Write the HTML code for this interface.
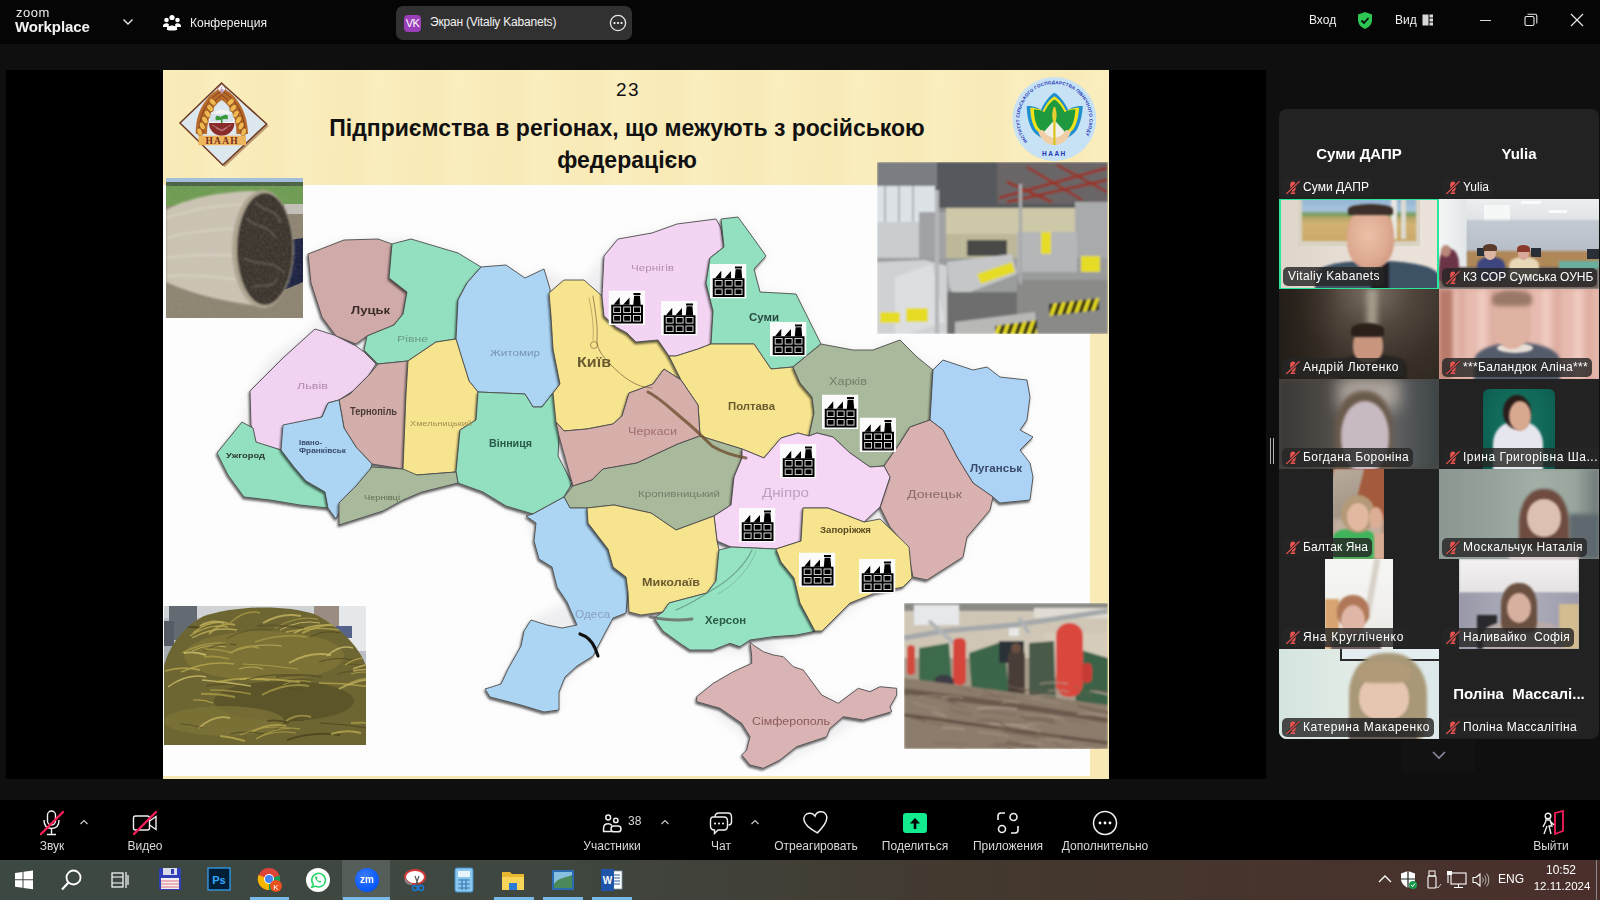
<!DOCTYPE html>
<html><head><meta charset="utf-8">
<style>
*{margin:0;padding:0;box-sizing:border-box}
html,body{width:1600px;height:900px;overflow:hidden;background:#0f0f0f;font-family:"Liberation Sans",sans-serif;color:#fff}
.a{position:absolute}
#top{left:0;top:0;width:1600px;height:44px;background:#050505}
#video{left:6px;top:70px;width:1260px;height:709px;background:#000}
#slide{left:163px;top:70px;width:946px;height:709px;background:linear-gradient(180deg,#faecba 0%,#f8e9b4 100%);overflow:hidden}
#white{left:163px;top:185px;width:927px;height:591px;background:#fdfdfd}
#toolbar{left:0;top:800px;width:1600px;height:60px;background:#000}
#taskbar{left:0;top:860px;width:1600px;height:40px;background:linear-gradient(90deg,#3c4842 0%,#3f4740 35%,#43392f 60%,#4a2f2b 100%)}
.tb-lbl{position:absolute;font-size:12px;color:#d8d8d8;text-align:center;white-space:nowrap}
</style></head><body>
<div id="top" class="a"></div>
<div id="video" class="a"></div>
<div id="slide" class="a"></div>
<div id="white" class="a"></div>
<div id="toolbar" class="a"></div>
<div id="taskbar" class="a"></div>
<div class="a" style="left:163px;top:70px;width:945px;height:115px;background:repeating-linear-gradient(90deg,rgba(255,255,255,0) 0px,rgba(235,215,150,0.10) 30px,rgba(255,255,240,0.10) 55px,rgba(255,255,255,0) 80px)"></div>
<div class="a" style="left:608px;top:79px;width:40px;text-align:center;font-size:19px;letter-spacing:1.5px;color:#111">23</div>
<div class="a" style="left:300px;top:112px;width:654px;text-align:center;font-size:23px;font-weight:bold;color:#111;line-height:32px;white-space:nowrap">Підприємства в регіонах, що межують з російською<br>федерацією</div>
<!-- NAAN diamond logo -->
<svg class="a" style="left:176px;top:78px" width="96" height="92" viewBox="0 0 96 92">
<polygon points="47.5,7 92.6,48 48.8,89 6,47" fill="#8a5a40" opacity="0.55"/>
<polygon points="45.5,5 90.6,46 46.8,87 4,45" fill="#dde7ee" stroke="#6e3a22" stroke-width="1.5"/>
<path d="M19.9,56 C19,35 30,16 45.7,9.7 C61,16 72,35 72,56 L60.5,56 C60.5,40 55,28 45.7,22 C36,28 31,40 31,56 Z" fill="#b86a2a"/>
<path d="M23,55 C23,36 32,20 45.7,13 M69,55 C69,36 59,20 45.7,13 M27,55 C27,38 35,24 45.7,17 M65,55 C65,38 56,24 45.7,17" stroke="#7a3a1a" stroke-width="0.9" fill="none"/>
<ellipse cx="23.7" cy="54.0" rx="2.6" ry="4.2" transform="rotate(-20 23.7 54.0)" fill="#f0b850" stroke="#8a4a1a" stroke-width="0.6"/><ellipse cx="26.3" cy="48.0" rx="2.6" ry="4.2" transform="rotate(-25 26.3 48.0)" fill="#f0b850" stroke="#8a4a1a" stroke-width="0.6"/><ellipse cx="28.9" cy="42.0" rx="2.6" ry="4.2" transform="rotate(-30 28.9 42.0)" fill="#f0b850" stroke="#8a4a1a" stroke-width="0.6"/><ellipse cx="31.5" cy="36.0" rx="2.6" ry="4.2" transform="rotate(-35 31.5 36.0)" fill="#f0b850" stroke="#8a4a1a" stroke-width="0.6"/><ellipse cx="34.1" cy="30.0" rx="2.6" ry="4.2" transform="rotate(-40 34.1 30.0)" fill="#f0b850" stroke="#8a4a1a" stroke-width="0.6"/><ellipse cx="36.7" cy="24.0" rx="2.6" ry="4.2" transform="rotate(-45 36.7 24.0)" fill="#f0b850" stroke="#8a4a1a" stroke-width="0.6"/><ellipse cx="67.7" cy="54.0" rx="2.6" ry="4.2" transform="rotate(20 67.7 54.0)" fill="#f0b850" stroke="#8a4a1a" stroke-width="0.6"/><ellipse cx="65.1" cy="48.0" rx="2.6" ry="4.2" transform="rotate(25 65.1 48.0)" fill="#f0b850" stroke="#8a4a1a" stroke-width="0.6"/><ellipse cx="62.5" cy="42.0" rx="2.6" ry="4.2" transform="rotate(30 62.5 42.0)" fill="#f0b850" stroke="#8a4a1a" stroke-width="0.6"/><ellipse cx="59.9" cy="36.0" rx="2.6" ry="4.2" transform="rotate(35 59.9 36.0)" fill="#f0b850" stroke="#8a4a1a" stroke-width="0.6"/><ellipse cx="57.3" cy="30.0" rx="2.6" ry="4.2" transform="rotate(40 57.3 30.0)" fill="#f0b850" stroke="#8a4a1a" stroke-width="0.6"/><ellipse cx="54.7" cy="24.0" rx="2.6" ry="4.2" transform="rotate(45 54.7 24.0)" fill="#f0b850" stroke="#8a4a1a" stroke-width="0.6"/>
<polygon points="45.7,6 50,11 45.7,16 41.4,11" fill="#fff" stroke="#7a3a2a" stroke-width="0.6"/>
<text x="45.7" y="13.5" font-family="Liberation Serif" font-size="6" fill="#8a2b5a" text-anchor="middle">ф</text>
<circle cx="45.7" cy="44.5" r="12.7" fill="#f4f4f4"/>
<path d="M33,45 A12.7,12.7 0 0 0 58.4,45 Z" fill="#8a2b2b"/>
<path d="M36,47 L45.7,52 M40,50 L45.7,53 M55,47 L45.7,52 M51,50 L45.7,53" stroke="#d8a0a0" stroke-width="0.6"/>
<rect x="34" y="36" width="23" height="8" fill="#c8d8e8" opacity="0.7"/>
<path d="M45.7,45 L45.7,38 M45.7,41 C42,37 39.5,38.5 40.5,41.5 Z M45.7,40 C49,36 52,37.5 51,40.5 Z" stroke="#3a9a3a" stroke-width="1.6" fill="#3a9a3a"/>
<rect x="22.5" y="57.7" width="47.5" height="9.5" fill="#eeb65c"/>
<text x="46.2" y="66" font-family="Liberation Serif" font-weight="bold" font-size="9.5" fill="#7a2f1f" text-anchor="middle" letter-spacing="1.2">НААН</text>
</svg>
<!-- Institute circle logo -->
<svg class="a" style="left:1010px;top:75px" width="90" height="90" viewBox="0 0 90 90">
<circle cx="44.4" cy="44" r="42" fill="#c7e2f5"/>
<path d="M16.7,31 C24,31 29,33 31,35 C34,28 39,21 44.4,17.8 C50,21 55,28 58.3,35 C60,33 65,31 72.8,31 C72,42 70,50 66,56 C60,63 52,66 44.4,66 C37,66 29,63 23,56 C19,50 17,42 16.7,31 Z" fill="#1f8fd0"/>
<path d="M16.7,31 C24,31 29,33 31,35 C34,28 39,21 44.4,17.8 C50,21 55,28 58.3,35 C60,33 65,31 72.8,31 C72,42 70,50 66,56 C60,63 52,66 44.4,66 C37,66 29,63 23,56 C19,50 17,42 16.7,31 Z" fill="#f2e21a" transform="translate(44.4 44) scale(0.87) translate(-44.4 -44)"/>
<path d="M16.7,31 C24,31 29,33 31,35 C34,28 39,21 44.4,17.8 C50,21 55,28 58.3,35 C60,33 65,31 72.8,31 C72,42 70,50 66,56 C60,63 52,66 44.4,66 C37,66 29,63 23,56 C19,50 17,42 16.7,31 Z" fill="#1f9a3e" transform="translate(44.4 44) scale(0.74) translate(-44.4 -44)"/>
<path d="M33,58 L44.4,45 L56,58 L55,66 L34,66 Z" fill="#f2efe8"/>
<path d="M28,56 C31,66 38,70 44,70 L44,63 C40,62 36,60 33,55 Z M61,56 C58,66 51,70 45,70 L45,63 C49,62 53,60 56,55 Z" fill="#f1cfa6"/>
<path d="M44.4,32 L44.4,70" stroke="#d9c21a" stroke-width="2.2"/>
<ellipse cx="44.4" cy="40" rx="2.2" ry="7" fill="#e8d030"/>
<text x="44.4" y="81" font-family="Liberation Sans" font-weight="bold" font-size="6.5" fill="#2234b8" text-anchor="middle" letter-spacing="1.5">НААН</text>
<path id="arc" d="M17.6,66.5 A35,35 0 1 1 71.2,66.5" fill="none"/>
<text font-family="Liberation Sans" font-weight="bold" font-size="4.6" fill="#2234b8" letter-spacing="0.2"><textPath href="#arc">ІНСТИТУТ СІЛЬСЬКОГО ГОСПОДАРСТВА ПІВНІЧНОГО СХОДУ</textPath></text>
</svg>
<svg class="a" style="left:0;top:0" width="1600" height="900" viewBox="0 0 1600 900">
<defs>
<filter id="sh" x="-10%" y="-10%" width="120%" height="120%">
<feGaussianBlur in="SourceAlpha" stdDeviation="1.2"/>
<feOffset dx="-1.2" dy="1.5" result="o"/>
<feFlood flood-color="#000" flood-opacity="0.6"/>
<feComposite in2="o" operator="in"/>
<feMerge><feMergeNode/><feMergeNode in="SourceGraphic"/></feMerge>
</filter>
<filter id="glow" x="-10%" y="-10%" width="120%" height="120%">
<feGaussianBlur stdDeviation="5"/>
</filter>
</defs>
<g fill="#e4e4e8" filter="url(#glow)" opacity="0.6">
<polygon points="308,254 344,240 378,239 411,239 458,253 481,267 506,265 525,278 544,269 564,280 584,280 604,256 618,239 652,233 677,224 716,219 738,217 754,239 766,256 754,269 760,292 796,294 810,322 821,344 853,350 873,350 900,340 933,370 943,360 973,370 1000,377 1027,380 1030,397 1020,430 1033,437 1020,450 1033,477 1030,500 1000,503 993,497 990,510 967,537 963,557 927,580 913,577 912,578 903,587 875,593 822,631 797,640 769,643 794,668 812,690 840,702 862,690 887,687 896,693 887,715 853,724 828,740 794,758 769,768 750,752 744,737 713,712 697,699 707,690 731,684 750,668 750,652 719,652 688,649 663,631 654,618 626,613 605,633 577,666 559,692 559,710 544,712 521,705 490,697 485,689 501,684 521,646 531,620 567,602 552,567 534,541 526,516 506,506 483,492 458,483 422,492 383,511 339,525 328,508 244,497 228,475 217,453 242,422 250,389 272,356 306,333 322,317 311,283"/>
</g>
<g stroke="#4e4e4e" stroke-width="0.9" stroke-linejoin="round">
<!-- Volyn -->
<polygon filter="url(#sh)" fill="#cfaaa8" points="308,254 344,240 378,239 392,244 389,278 407,292 403,314 394,325 367,336 356,344 336,336 322,317 311,283"/>
<!-- Rivne -->
<polygon filter="url(#sh)" fill="#92e0c0" points="392,244 411,239 458,253 481,267 467,283 458,300 456,339 436,342 408,361 378,364 364,350 367,336 394,325 403,314 407,292 389,278"/>
<!-- Zhytomyr -->
<polygon filter="url(#sh)" fill="#acd5f3" points="481,267 506,265 525,278 544,269 550,289 551,316 553,349 560,384 553,393 542,407 533,407 525,394 478,392 469,381 461,356 456,339 458,300 467,283"/>
<!-- Lviv -->
<polygon filter="url(#sh)" fill="#f1d3f1" points="315,329 334,335 356,346 364,352 376,364 369,375 353,391 339,400 328,403 322,417 289,425 281,450 256,443 251,425 250,391 283,358"/>
<!-- Ternopil -->
<polygon filter="url(#sh)" fill="#d3aeaa" points="378,364 408,361 406,394 403,469 372,464 356,447 344,428 339,400 350,394 369,375"/>
<!-- Khmelnytskyi -->
<polygon filter="url(#sh)" fill="#f6e48e" points="408,361 436,342 456,339 469,381 478,392 476,420 460,430 456,472 417,475 406,478 403,469 406,394"/>
<!-- Vinnytsia -->
<polygon filter="url(#sh)" fill="#92e0c0" points="478,392 525,394 533,407 542,407 553,393 556,417 559,436 558,456 572,483 564,497 533,514 506,506 483,492 458,483 456,472 460,430 476,420"/>
<!-- Zakarpattia -->
<polygon filter="url(#sh)" fill="#92e0c0" points="217,453 242,422 253,428 256,442 281,450 294,467 306,481 325,492 328,508 300,505 270,500 244,497 228,475"/>
<!-- Ivano-Frankivsk -->
<polygon filter="url(#sh)" fill="#acd5f3" points="283,425 322,417 328,403 339,400 344,428 356,447 372,464 367,481 356,486 344,503 336,519 328,508 325,492 306,481 294,467 281,450"/>
<!-- Chernivtsi -->
<polygon filter="url(#sh)" fill="#a9b99b" points="339,503 356,486 372,467 403,469 417,475 456,472 458,483 422,492 403,500 383,511 339,525"/>
<!-- Kyiv -->
<polygon filter="url(#sh)" fill="#f6e48e" points="549,293 564,280 584,280 602,296 604,316 616,327 627,333 636,342 658,340 669,356 681,380 664,369 653,384 640,389 629,393 622,416 613,424 587,429 564,431 556,422 553,393 560,384 553,349 551,316"/>
<!-- Chernihiv -->
<polygon filter="url(#sh)" fill="#f3d5f3" points="604,256 618,239 652,233 677,224 716,219 721,228 724,247 710,258 706,283 713,311 711,344 698,349 676,356 669,356 658,340 636,342 627,333 616,327 604,316 602,296"/>
<!-- Sumy -->
<polygon filter="url(#sh)" fill="#92e0c0" points="721,219 738,217 754,239 766,256 754,269 760,292 796,294 810,322 821,344 793,367 771,369 754,344 711,344 713,311 706,283 710,258 724,247"/>
<!-- Poltava -->
<polygon filter="url(#sh)" fill="#f6e48e" points="669,356 676,356 698,349 711,344 754,344 771,369 793,367 800,383 812,397 814,413 809,436 798,433 781,438 764,458 742,449 700,436 698,405 681,380"/>
<!-- Kharkiv -->
<polygon filter="url(#sh)" fill="#a9b99b" points="793,367 821,344 853,350 873,350 900,340 917,357 933,370 930,420 910,427 900,443 884,466 870,467 850,453 833,437 817,433 809,436 814,413 812,397 800,383"/>
<!-- Luhansk -->
<polygon filter="url(#sh)" fill="#acd3f5" points="933,370 943,360 973,370 987,367 1000,377 1027,380 1030,397 1027,420 1020,430 1033,437 1020,450 1030,463 1033,477 1030,500 1000,503 993,497 973,483 957,457 943,430 930,420"/>
<!-- Donetsk -->
<polygon filter="url(#sh)" fill="#d9b1b1" points="884,466 900,443 910,427 930,420 943,430 957,457 973,483 993,497 990,510 967,537 963,557 927,580 913,577 907,547 890,527 880,507 890,477"/>
<!-- Cherkasy -->
<polygon filter="url(#sh)" fill="#d6aeaa" points="556,422 564,431 587,429 613,424 622,416 629,393 640,389 653,384 664,369 681,380 698,405 700,436 678,444 637,463 603,469 592,480 573,486 559,436"/>
<!-- Kirovohrad -->
<polygon filter="url(#sh)" fill="#a9b99b" points="564,497 573,486 592,480 603,469 637,463 678,444 700,436 742,449 742,458 734,477 731,505 714,516 676,530 651,513 614,505 587,508 570,508"/>
<!-- Dnipro -->
<polygon filter="url(#sh)" fill="#f5d6f5" points="742,449 764,458 781,438 798,433 809,436 817,433 833,437 850,453 870,467 884,466 890,477 880,507 864,522 828,508 803,508 801,541 776,549 731,547 717,541 714,516 731,505 734,477 742,458"/>
<!-- Odesa -->
<polygon filter="url(#sh)" fill="#acd5f3" points="526,516 533,514 564,497 570,508 587,508 588,523 608,549 613,567 626,577 628,592 626,613 613,618 605,633 593,656 577,666 565,677 559,692 559,710 544,712 521,705 490,697 485,689 501,684 508,669 521,646 524,631 531,620 547,625 562,628 577,625 567,602 557,587 552,567 539,559 534,541 536,523"/>
<!-- Mykolaiv -->
<polygon filter="url(#sh)" fill="#f6e48e" points="587,508 614,505 651,513 676,530 714,516 717,541 719,550 716,581 707,593 669,603 663,612 641,615 629,612 628,592 626,577 613,567 608,549 588,523"/>
<!-- Kherson -->
<polygon filter="url(#sh)" fill="#96e3c3" points="663,612 669,603 707,593 716,581 719,550 731,547 776,549 781,562 794,578 800,603 815,631 813,631.7 796.7,635 773,636.7 750,640 740,646.7 730,643.3 713,650 690,650 680,643.3 663,631 654,618"/>
<!-- Zaporizhzhia -->
<polygon filter="url(#sh)" fill="#f6e48e" points="776,549 801,541 803,508 828,508 864,522 880,519 909,547 912,578 903,587 875,593 850,603 822,631 815,631 800,603 794,578 781,562"/>
<!-- Crimea -->
<polygon filter="url(#sh)" fill="#dab4b4" points="750,641.7 753.3,645 763.3,651.7 773.3,655 783.3,656.7 793.3,666.7 803.3,670 821.7,695 838.3,703.3 858.3,688.3 870,691.7 880,686.7 896.7,688.3 896.7,695 890,706.7 891.7,711.7 863.3,720 843.3,716.7 830,728.3 826.7,736.7 796.7,746.7 780,760 763.3,768.3 750,765 741.7,755 746.7,750 750,736.7 741.7,723.3 720,708.3 696.7,701.7 696.7,696.7 713.3,683.3 733.3,671.7 751.7,663.3 751.7,656.7"/>
</g>
<g fill="none" stroke-linecap="round" stroke-linejoin="round" style="filter:blur(0.4px)">
<path d="M593,296 C595,310 598,325 597,338 C596,348 602,356 612,366 C622,376 636,388 652,388" stroke="#8a7040" stroke-width="1" opacity="0.8"/>
<path d="M589,298 C592,312 594,326 593,340" stroke="#8a7040" stroke-width="0.8" opacity="0.6"/>
<circle cx="594" cy="345" r="3.5" stroke="#8a7040" stroke-width="0.9" opacity="0.8"/>
<path d="M648,392 C660,398 672,410 684,420 C694,428 702,436 712,446 C722,452 735,456 746,458" stroke="#6a4a2a" stroke-width="3" opacity="0.75"/>
<path d="M752,550 C745,565 730,580 712,590 C700,598 690,604 676,610" stroke="#5a8a78" stroke-width="1.2" opacity="0.7"/>
<path d="M756,551 C750,568 736,584 718,594" stroke="#5a8a78" stroke-width="0.8" opacity="0.5"/>
</g>
<path d="M580,634 C586,636 592,641 595,648 L598,656" stroke="#111" stroke-width="3.2" fill="none" stroke-linecap="round"/>
<path d="M650,617 C665,620 678,621 692,619" stroke="#666" stroke-width="3" fill="none" opacity="0.8" stroke-linecap="round"/>
</svg>
<svg class="a" style="left:0;top:0" width="1600" height="900" viewBox="0 0 1600 900"><g font-family="Liberation Sans" style="filter:blur(0.3px)">
<text x="351" y="313.5" font-size="11" fill="#3a2a28" font-weight="bold" textLength="39" lengthAdjust="spacingAndGlyphs">Луцьк</text>
<text x="397" y="341.5" font-size="9" fill="#6a9a88" textLength="31" lengthAdjust="spacingAndGlyphs">Рівне</text>
<text x="490" y="355.5" font-size="9.5" fill="#7894b4" textLength="50" lengthAdjust="spacingAndGlyphs">Житомир</text>
<text x="577" y="366.5" font-size="15" fill="#6a5a30" font-weight="bold" textLength="34" lengthAdjust="spacingAndGlyphs">Київ</text>
<text x="297" y="388.5" font-size="9" fill="#b08cb0" textLength="31" lengthAdjust="spacingAndGlyphs">Львів</text>
<text x="350" y="414.5" font-size="10" fill="#4a3a38" font-weight="bold" textLength="47" lengthAdjust="spacingAndGlyphs">Тернопіль</text>
<text x="410" y="425.5" font-size="7" fill="#a09050" textLength="62" lengthAdjust="spacingAndGlyphs">Хмельницький</text>
<text x="489" y="446.5" font-size="10.5" fill="#2a5a48" font-weight="bold" textLength="43" lengthAdjust="spacingAndGlyphs">Вінниця</text>
<text x="631" y="270.5" font-size="9" fill="#b48cac" textLength="43" lengthAdjust="spacingAndGlyphs">Чернігів</text>
<text x="749" y="320.5" font-size="10.5" fill="#2a4a40" font-weight="bold" textLength="30" lengthAdjust="spacingAndGlyphs">Суми</text>
<text x="829" y="384.5" font-size="10" fill="#70806a" textLength="38" lengthAdjust="spacingAndGlyphs">Харків</text>
<text x="728" y="409.5" font-size="10" fill="#6a5a30" font-weight="bold" textLength="47" lengthAdjust="spacingAndGlyphs">Полтава</text>
<text x="628" y="434.5" font-size="10" fill="#a07070" textLength="49" lengthAdjust="spacingAndGlyphs">Черкаси</text>
<text x="226" y="457.5" font-size="8" fill="#2a3a30" font-weight="bold" textLength="39" lengthAdjust="spacingAndGlyphs">Ужгород</text>
<text x="299" y="444.5" font-size="7.5" fill="#3a4a6a" font-weight="bold" textLength="23" lengthAdjust="spacingAndGlyphs">Івано-</text>
<text x="299" y="452.5" font-size="7.5" fill="#3a4a6a" font-weight="bold" textLength="47" lengthAdjust="spacingAndGlyphs">Франківськ</text>
<text x="364" y="499.5" font-size="7" fill="#607050" textLength="36" lengthAdjust="spacingAndGlyphs">Чернівці</text>
<text x="638" y="496.5" font-size="9" fill="#70806a" textLength="82" lengthAdjust="spacingAndGlyphs">Кропивницький</text>
<text x="762" y="496.5" font-size="12" fill="#c0a0c0" textLength="47" lengthAdjust="spacingAndGlyphs">Дніпро</text>
<text x="820" y="532.5" font-size="8.5" fill="#5a4a20" font-weight="bold" textLength="51" lengthAdjust="spacingAndGlyphs">Запоріжжя</text>
<text x="642" y="585.5" font-size="11" fill="#6a5a30" font-weight="bold" textLength="58" lengthAdjust="spacingAndGlyphs">Миколаїв</text>
<text x="705" y="623.5" font-size="11" fill="#2a5a48" font-weight="bold" textLength="41" lengthAdjust="spacingAndGlyphs">Херсон</text>
<text x="907" y="497.5" font-size="11" fill="#8a6a6a" textLength="55" lengthAdjust="spacingAndGlyphs">Донецьк</text>
<text x="970" y="471.5" font-size="10.5" fill="#3a4a6a" font-weight="bold" textLength="52" lengthAdjust="spacingAndGlyphs">Луганськ</text>
<text x="575" y="617.5" font-size="10" fill="#8aa0c0" textLength="35" lengthAdjust="spacingAndGlyphs">Одеса</text>
<text x="752" y="724.5" font-size="10" fill="#8a5a5a" textLength="78" lengthAdjust="spacingAndGlyphs">Сімферополь</text>
</g></svg>
<svg class="a" style="left:0;top:0" width="1600" height="900" viewBox="0 0 1600 900">
<defs><symbol id="fac" viewBox="0 0 36.5 34.5">
<rect width="36.5" height="34.5" fill="#fbfbfb"/>
<rect x="2.75" y="14.25" width="31.75" height="18.75" fill="#000"/>
<rect x="25" y="2.5" width="7" height="2" fill="#000"/>
<path d="M25.6,5.2 L31.4,5.2 L32.2,14.5 L24.8,14.5 Z" fill="#000"/>
<path d="M5,14.3 L11.25,6.75 L11.25,14.3 Z M14.5,14.3 L21,7 L21,14.3 Z" fill="#000"/>
<g fill="none" stroke="#e8e8e8" stroke-width="0.9">
<rect x="5.2" y="16.5" width="6.9" height="5.6"/><rect x="15.2" y="16.5" width="6.9" height="5.6"/><rect x="25" y="16.5" width="7" height="5.6"/>
<rect x="5.2" y="25" width="6.9" height="5.6"/><rect x="15.2" y="25" width="6.9" height="5.6"/><rect x="25" y="25" width="7" height="5.6"/>
</g></symbol></defs>
<use href="#fac" x="608.5" y="290.5" width="36.5" height="34.5"/>
<use href="#fac" x="661" y="301" width="36.5" height="34.5"/>
<use href="#fac" x="710" y="264" width="36.5" height="34.5"/>
<use href="#fac" x="770" y="322" width="36.5" height="34.5"/>
<use href="#fac" x="822" y="394.5" width="36.5" height="34.5"/>
<use href="#fac" x="859.5" y="417.5" width="36.5" height="34.5"/>
<use href="#fac" x="780" y="444" width="36.5" height="34.5"/>
<use href="#fac" x="739" y="508" width="36.5" height="34.5"/>
<use href="#fac" x="799" y="552.5" width="36.5" height="34.5"/>
<use href="#fac" x="859" y="559" width="36.5" height="34.5"/>
</svg>
<!-- hay bale photo -->
<svg class="a" style="left:166px;top:178px" width="137" height="140" viewBox="0 0 137 140">
<defs><filter id="b1"><feGaussianBlur stdDeviation="0.8"/></filter>
<filter id="b1n"><feTurbulence type="fractalNoise" baseFrequency="0.35" numOctaves="2" seed="3"/><feColorMatrix values="0 0 0 0 0.5  0 0 0 0 0.47  0 0 0 0 0.42  0 0 0 1.4 -0.45"/><feComposite in2="SourceGraphic" operator="in"/></filter>
</defs>
<rect width="137" height="8" fill="#a4bede"/>
<rect y="4" width="137" height="5" fill="#4a6244"/>
<rect y="8" width="137" height="22" fill="#6e9c52"/>
<rect y="28" width="137" height="112" fill="#8e8472"/>
<rect x="118" y="26" width="19" height="10" fill="#c2c0b8"/>
<path d="M124,62 L137,60 L137,104 L118,112 Z" fill="#1c2242"/>
<g filter="url(#b1)">
<path d="M0,32 C20,20 60,12 97,13 L97,128 C70,126 30,118 0,104 Z" fill="#cbc4b4"/>
<path d="M0,40 C30,30 60,26 90,26 M0,60 C30,52 60,50 90,50 M0,80 C30,76 60,76 90,78 M0,98 C30,96 60,100 90,104" stroke="#e0dacb" stroke-width="1.5" fill="none" opacity="0.8"/>
<ellipse cx="97" cy="71" rx="31" ry="59" fill="#ada490"/>
<ellipse cx="99" cy="71" rx="28" ry="56" fill="#3a342e"/>
<path d="M80,40 C90,50 100,45 110,60 M78,80 C95,90 105,80 118,95 M85,110 C95,105 105,112 112,100 M90,25 C100,35 110,30 115,45" stroke="#6a6258" stroke-width="1.2" fill="none"/>
</g>
<rect y="0" width="137" height="140" fill="#000" filter="url(#b1n)" opacity="0.15"/>
</svg>
<!-- factory photo 1 -->
<svg class="a" style="left:877px;top:162px" width="231" height="172" viewBox="0 0 231 172">
<defs><filter id="b2"><feGaussianBlur stdDeviation="0.9"/></filter>
<pattern id="stripe" width="8" height="8" patternUnits="userSpaceOnUse" patternTransform="skewX(-20)"><rect width="8" height="8" fill="#e8dc20"/><rect width="4" height="8" fill="#161616"/></pattern></defs>
<g filter="url(#b2)">
<rect width="231" height="172" fill="#8c8e90"/>
<rect width="231" height="46" fill="#55585c"/>
<rect x="120" y="0" width="111" height="42" fill="#6a6566"/>
<path d="M122,36 L230,6 M130,40 L230,18 M150,5 L205,38 M180,3 L230,30 M130,20 L175,40" stroke="#9a3024" stroke-width="2.5"/>
<rect x="0" y="0" width="60" height="25" fill="#7a7e82"/>
<rect x="0" y="24" width="58" height="38" fill="#dde2e6"/>
<path d="M8,24 L8,62 M22,24 L22,62 M36,24 L36,62" stroke="#a0a4a8" stroke-width="1.5"/>
<rect x="0" y="60" width="42" height="36" fill="#c8ccce"/>
<rect x="42" y="50" width="28" height="50" fill="#a0a2a4"/>
<rect x="69" y="46" width="129" height="28" fill="#cdc8a8"/>
<rect x="69" y="72" width="129" height="24" fill="#bdb898"/>
<rect x="90" y="78" width="40" height="16" fill="#4a4846"/>
<rect x="198" y="40" width="33" height="70" fill="#a8aaac"/>
<rect x="0" y="96" width="231" height="76" fill="#9a9c9c"/>
<path d="M0,100 L48,98 L70,104 L70,172 L0,172 Z" fill="#cfd1d3"/>
<path d="M18,115 L55,102 L68,160 L30,172 L18,172 Z" fill="#dcdee0"/>
<path d="M70,100 L135,92 L140,112 L80,135 L72,125 Z" fill="#c4c6c8"/>
<path d="M100,112 L135,100 L138,110 L104,122 Z" fill="#e6dc26"/>
<rect x="140" y="70" width="60" height="40" fill="#b4b6b8"/>
<rect x="164" y="70" width="10" height="22" fill="#e6dc26"/>
<rect x="204" y="94" width="19" height="16" fill="#e6dc26"/>
<rect x="3" y="150" width="20" height="11" fill="#e6dc26"/>
<rect x="29" y="146" width="22" height="14" fill="#e6dc26"/>
<rect x="140" y="118" width="91" height="54" fill="#8a8a88"/>
<rect x="70" y="130" width="70" height="42" fill="#6e6e6e"/>
<path d="M172,142 L222,136 L222,148 L172,154 Z" fill="url(#stripe)"/>
<path d="M78,160 L158,150 L160,172 L78,172 Z" fill="#b8b8b6"/>
<path d="M118,164 L160,158 L160,172 L118,172 Z" fill="url(#stripe)"/>
<rect x="58" y="28" width="4" height="144" fill="#b4b6b8"/>
<rect x="142" y="22" width="3" height="100" fill="#a8aaac"/>
</g>
</svg>
<!-- flax photo -->
<svg class="a" style="left:164px;top:606px" width="202" height="139" viewBox="0 0 202 139">
<defs><filter id="b3"><feGaussianBlur stdDeviation="0.6"/></filter><clipPath id="fc"><path d="M0,139 L0,60 C5,40 20,20 40,10 C70,0 120,-2 150,8 C175,20 195,40 202,60 L202,139 Z"/></clipPath></defs>
<g filter="url(#b3)">
<rect width="202" height="139" fill="#b8bec4"/>
<rect x="0" y="0" width="202" height="12" fill="#cfd3d6"/>
<rect x="5" y="0" width="28" height="34" fill="#646a72"/>
<rect x="0" y="15" width="10" height="26" fill="#545c66"/>
<rect x="0" y="40" width="16" height="55" fill="#a4acb2"/>
<rect x="150" y="0" width="25" height="24" fill="#9a8c82"/>
<rect x="175" y="0" width="27" height="45" fill="#e4e8ea"/>
<rect x="172" y="20" width="16" height="12" fill="#56648a"/>
<rect x="0" y="128" width="35" height="11" fill="#7a3022"/>
<g clip-path="url(#fc)">
<rect width="202" height="139" fill="#6e6630"/>
<ellipse cx="100" cy="50" rx="80" ry="25" fill="#7e7638" opacity="0.8"/>
<ellipse cx="120" cy="95" rx="70" ry="20" fill="#585028" opacity="0.8"/>
<ellipse cx="60" cy="115" rx="60" ry="15" fill="#7a7238" opacity="0.8"/>
<path d="M62,33 q23,-13 46,-9" stroke="#5a5028" stroke-width="0.9" fill="none" opacity="0.8"/><path d="M111,124 q14,-13 29,-9" stroke="#4a4220" stroke-width="0.9" fill="none" opacity="0.8"/><path d="M17,66 q27,-12 53,-8" stroke="#b8a850" stroke-width="1.7" fill="none" opacity="0.8"/><path d="M111,22 q22,-13 43,-9" stroke="#b8a850" stroke-width="0.9" fill="none" opacity="0.8"/><path d="M163,50 q13,-12 26,-8" stroke="#d0c070" stroke-width="1.6" fill="none" opacity="0.8"/><path d="M130,27 q21,-11 43,-7" stroke="#c4b462" stroke-width="1.6" fill="none" opacity="0.8"/><path d="M12,22 q14,-3 28,1" stroke="#4a4220" stroke-width="1.9" fill="none" opacity="0.8"/><path d="M88,126 q17,-10 34,-6" stroke="#b8a850" stroke-width="1.8" fill="none" opacity="0.8"/><path d="M46,84 q21,0 41,4" stroke="#a89a48" stroke-width="1.4" fill="none" opacity="0.8"/><path d="M116,24 q20,-11 40,-7" stroke="#d0c070" stroke-width="1.0" fill="none" opacity="0.8"/><path d="M93,20 q23,-2 47,2" stroke="#5a5028" stroke-width="1.9" fill="none" opacity="0.8"/><path d="M155,56 q17,-6 34,-2" stroke="#4a4220" stroke-width="0.9" fill="none" opacity="0.8"/><path d="M18,47 q24,-13 48,-9" stroke="#a89a48" stroke-width="1.8" fill="none" opacity="0.8"/><path d="M123,134 q26,-9 53,-5" stroke="#4a4220" stroke-width="2.0" fill="none" opacity="0.8"/><path d="M66,128 q17,-4 34,-0" stroke="#4a4220" stroke-width="0.9" fill="none" opacity="0.8"/><path d="M146,31 q15,-8 30,-4" stroke="#4a4220" stroke-width="0.9" fill="none" opacity="0.8"/><path d="M85,81 q28,-1 55,3" stroke="#5a5028" stroke-width="1.2" fill="none" opacity="0.8"/><path d="M79,58 q28,1 55,5" stroke="#b8a850" stroke-width="0.9" fill="none" opacity="0.8"/><path d="M29,94 q10,-1 20,3" stroke="#b8a850" stroke-width="1.2" fill="none" opacity="0.8"/><path d="M1,65 q17,-5 35,-1" stroke="#b8a850" stroke-width="1.8" fill="none" opacity="0.8"/><path d="M98,89 q24,-13 47,-9" stroke="#a89a48" stroke-width="1.9" fill="none" opacity="0.8"/><path d="M75,63 q12,-4 24,0" stroke="#c4b462" stroke-width="1.1" fill="none" opacity="0.8"/><path d="M187,68 q12,-4 24,-0" stroke="#c4b462" stroke-width="0.8" fill="none" opacity="0.8"/><path d="M29,27 q17,-14 35,-10" stroke="#b8a850" stroke-width="1.7" fill="none" opacity="0.8"/><path d="M28,45 q17,-8 34,-4" stroke="#c4b462" stroke-width="1.0" fill="none" opacity="0.8"/><path d="M93,132 q20,-9 39,-5" stroke="#b8a850" stroke-width="0.9" fill="none" opacity="0.8"/><path d="M65,47 q27,-11 53,-7" stroke="#c4b462" stroke-width="1.1" fill="none" opacity="0.8"/><path d="M181,58 q24,1 48,5" stroke="#5a5028" stroke-width="1.2" fill="none" opacity="0.8"/><path d="M122,26 q27,-6 54,-2" stroke="#b8a850" stroke-width="1.3" fill="none" opacity="0.8"/><path d="M42,80 q20,-4 40,0" stroke="#5a5028" stroke-width="1.9" fill="none" opacity="0.8"/><path d="M187,117 q26,-1 52,3" stroke="#a89a48" stroke-width="1.9" fill="none" opacity="0.8"/><path d="M38,74 q25,2 49,6" stroke="#d0c070" stroke-width="1.5" fill="none" opacity="0.8"/><path d="M37,88 q17,-1 34,3" stroke="#a89a48" stroke-width="2.2" fill="none" opacity="0.8"/><path d="M181,59 q14,-10 29,-6" stroke="#b8a850" stroke-width="1.3" fill="none" opacity="0.8"/><path d="M92,133 q22,-14 44,-10" stroke="#a89a48" stroke-width="1.3" fill="none" opacity="0.8"/><path d="M122,115 q12,-8 25,-4" stroke="#a89a48" stroke-width="1.9" fill="none" opacity="0.8"/><path d="M91,36 q26,-9 52,-5" stroke="#a89a48" stroke-width="1.4" fill="none" opacity="0.8"/><path d="M76,129 q24,-11 49,-7" stroke="#b8a850" stroke-width="0.8" fill="none" opacity="0.8"/><path d="M112,71 q23,-4 46,-0" stroke="#5a5028" stroke-width="2.2" fill="none" opacity="0.8"/><path d="M125,57 q21,-12 42,-8" stroke="#c4b462" stroke-width="1.9" fill="none" opacity="0.8"/><path d="M138,27 q25,-12 50,-8" stroke="#b8a850" stroke-width="2.0" fill="none" opacity="0.8"/><path d="M40,45 q16,-10 32,-6" stroke="#5a5028" stroke-width="1.3" fill="none" opacity="0.8"/><path d="M103,115 q11,-2 22,2" stroke="#4a4220" stroke-width="1.7" fill="none" opacity="0.8"/><path d="M155,77 q27,0 53,4" stroke="#b8a850" stroke-width="1.5" fill="none" opacity="0.8"/><path d="M99,17 q19,-11 38,-7" stroke="#c4b462" stroke-width="1.9" fill="none" opacity="0.8"/><path d="M28,32 q22,-12 45,-8" stroke="#c4b462" stroke-width="1.3" fill="none" opacity="0.8"/><path d="M98,82 q26,-12 51,-8" stroke="#5a5028" stroke-width="0.9" fill="none" opacity="0.8"/><path d="M36,20 q12,-7 24,-3" stroke="#c4b462" stroke-width="1.9" fill="none" opacity="0.8"/><path d="M173,68 q22,-6 45,-2" stroke="#5a5028" stroke-width="1.1" fill="none" opacity="0.8"/><path d="M53,76 q26,-6 52,-2" stroke="#b8a850" stroke-width="1.8" fill="none" opacity="0.8"/><path d="M167,128 q15,-5 30,-1" stroke="#b8a850" stroke-width="2.0" fill="none" opacity="0.8"/><path d="M26,30 q19,-13 38,-9" stroke="#b8a850" stroke-width="1.4" fill="none" opacity="0.8"/><path d="M40,51 q12,-2 25,2" stroke="#a89a48" stroke-width="1.7" fill="none" opacity="0.8"/><path d="M70,45 q13,-7 25,-3" stroke="#a89a48" stroke-width="2.1" fill="none" opacity="0.8"/><path d="M76,73 q30,-1 60,3" stroke="#b8a850" stroke-width="1.8" fill="none" opacity="0.8"/><path d="M189,63 q18,-8 37,-4" stroke="#c4b462" stroke-width="1.8" fill="none" opacity="0.8"/><path d="M4,81 q19,-14 38,-10" stroke="#d0c070" stroke-width="1.5" fill="none" opacity="0.8"/><path d="M56,130 q12,1 25,5" stroke="#b8a850" stroke-width="2.2" fill="none" opacity="0.8"/><path d="M20,47 q11,-2 22,2" stroke="#d0c070" stroke-width="1.9" fill="none" opacity="0.8"/><path d="M156,117 q24,1 47,5" stroke="#4a4220" stroke-width="1.0" fill="none" opacity="0.8"/><path d="M175,83 q24,-13 48,-9" stroke="#c4b462" stroke-width="1.9" fill="none" opacity="0.8"/><path d="M35,122 q15,-14 31,-10" stroke="#c4b462" stroke-width="1.9" fill="none" opacity="0.8"/><path d="M16,118 q11,-0 23,4" stroke="#4a4220" stroke-width="0.8" fill="none" opacity="0.8"/><path d="M189,65 q28,-4 57,-0" stroke="#c4b462" stroke-width="1.5" fill="none" opacity="0.8"/><path d="M45,28 q13,-13 26,-9" stroke="#b8a850" stroke-width="2.1" fill="none" opacity="0.8"/><path d="M119,79 q14,-7 28,-3" stroke="#a89a48" stroke-width="1.0" fill="none" opacity="0.8"/><path d="M66,17 q15,-14 30,-10" stroke="#a89a48" stroke-width="1.5" fill="none" opacity="0.8"/><path d="M186,77 q15,-7 30,-3" stroke="#a89a48" stroke-width="1.9" fill="none" opacity="0.8"/><path d="M82,74 q27,-8 53,-4" stroke="#5a5028" stroke-width="1.2" fill="none" opacity="0.8"/><path d="M41,43 q14,0 28,4" stroke="#a89a48" stroke-width="1.7" fill="none" opacity="0.8"/>
</g>
</g>
</svg>
<!-- factory photo 2 -->
<svg class="a" style="left:904px;top:603px" width="204" height="146" viewBox="0 0 204 146">
<defs><filter id="b4"><feGaussianBlur stdDeviation="0.8"/></filter></defs>
<g filter="url(#b4)">
<rect width="204" height="146" fill="#a89c8c"/>
<rect width="204" height="55" fill="#cfc6b6"/>
<rect x="0" y="0" width="204" height="8" fill="#8a8a86"/>
<rect x="10" y="2" width="45" height="20" fill="#e6e8ea"/>
<rect x="130" y="5" width="74" height="10" fill="#e0dcd4"/>
<path d="M0,35 L40,28 L110,22 L204,8" stroke="#a4a8aa" stroke-width="5" fill="none"/>
<path d="M25,18 L50,40 M115,15 L125,30" stroke="#b0b4b6" stroke-width="4" fill="none"/>
<rect x="105" y="25" width="10" height="8" fill="#e8e8e8"/>
<rect x="140" y="30" width="64" height="45" fill="#d6ccbc"/>
<path d="M15,45 L45,40 L48,82 L15,85 Z" fill="#3e6a4c"/>
<path d="M65,50 L100,38 L105,90 L68,92 Z" fill="#3a6648"/>
<rect x="95" y="38" width="25" height="22" fill="#2a3038"/>
<path d="M170,45 L204,55 L204,110 L172,108 Z" fill="#3a6246"/>
<path d="M125,40 L150,38 L152,100 L125,98 Z" fill="#4a5a48"/>
<rect x="3" y="42" width="8" height="30" rx="4" fill="#d2483c"/>
<rect x="49" y="35" width="13" height="47" rx="5" fill="#d6453a"/>
<rect x="152" y="20" width="27" height="74" rx="13" fill="#d9473c"/>
<rect x="178" y="60" width="10" height="20" rx="5" fill="#c83a34"/>
<rect x="104" y="48" width="17" height="46" rx="4" fill="#4a3e38"/>
<circle cx="112" cy="45" r="5" fill="#6a5040"/>
<rect x="30" y="72" width="20" height="20" rx="8" fill="#3a3a44"/>
<path d="M0,75 C40,80 100,88 204,102 L204,146 L0,146 Z" fill="#8c7c6c"/>
<path d="M0,85 C50,92 120,100 204,115 L204,120 C120,106 50,98 0,92 Z" fill="#6a5a4e"/>
<path d="M0,112 C50,118 110,128 204,140" stroke="#5e5044" stroke-width="3" fill="none"/>
<path d="M86,117 q19,1 38,4" stroke="#7a6a5a" stroke-width="1.0" fill="none" opacity="0.7"/><path d="M97,122 q17,-2 35,1" stroke="#b4a494" stroke-width="1.0" fill="none" opacity="0.7"/><path d="M102,139 q15,2 31,5" stroke="#6a5a4c" stroke-width="2.0" fill="none" opacity="0.7"/><path d="M124,121 q9,-3 19,0" stroke="#a89886" stroke-width="0.9" fill="none" opacity="0.7"/><path d="M36,96 q8,1 16,4" stroke="#6a5a4c" stroke-width="1.5" fill="none" opacity="0.7"/><path d="M37,95 q11,-3 22,0" stroke="#a89886" stroke-width="1.3" fill="none" opacity="0.7"/><path d="M53,146 q20,4 40,7" stroke="#b4a494" stroke-width="1.2" fill="none" opacity="0.7"/><path d="M44,99 q8,3 17,6" stroke="#6a5a4c" stroke-width="0.9" fill="none" opacity="0.7"/><path d="M55,84 q8,2 15,5" stroke="#7a6a5a" stroke-width="1.1" fill="none" opacity="0.7"/><path d="M173,111 q20,0 40,3" stroke="#a89886" stroke-width="1.5" fill="none" opacity="0.7"/><path d="M38,125 q12,-1 23,2" stroke="#a89886" stroke-width="2.0" fill="none" opacity="0.7"/><path d="M144,88 q11,-2 21,1" stroke="#a89886" stroke-width="1.4" fill="none" opacity="0.7"/><path d="M92,125 q10,1 20,4" stroke="#7a6a5a" stroke-width="1.3" fill="none" opacity="0.7"/><path d="M73,106 q20,-3 40,0" stroke="#b4a494" stroke-width="2.0" fill="none" opacity="0.7"/><path d="M4,92 q20,2 40,5" stroke="#a89886" stroke-width="0.9" fill="none" opacity="0.7"/><path d="M28,109 q8,2 15,5" stroke="#b4a494" stroke-width="1.3" fill="none" opacity="0.7"/><path d="M14,94 q15,-3 31,0" stroke="#b4a494" stroke-width="1.2" fill="none" opacity="0.7"/><path d="M86,143 q14,2 27,5" stroke="#6a5a4c" stroke-width="1.0" fill="none" opacity="0.7"/><path d="M29,140 q18,-1 35,2" stroke="#7a6a5a" stroke-width="1.0" fill="none" opacity="0.7"/><path d="M120,117 q16,0 32,3" stroke="#6a5a4c" stroke-width="1.5" fill="none" opacity="0.7"/><path d="M80,87 q8,5 16,8" stroke="#7a6a5a" stroke-width="1.7" fill="none" opacity="0.7"/><path d="M74,108 q19,1 38,4" stroke="#7a6a5a" stroke-width="1.9" fill="none" opacity="0.7"/><path d="M186,88 q13,2 27,5" stroke="#a89886" stroke-width="1.1" fill="none" opacity="0.7"/><path d="M174,93 q8,-1 15,2" stroke="#6a5a4c" stroke-width="1.1" fill="none" opacity="0.7"/><path d="M9,99 q14,5 28,8" stroke="#a89886" stroke-width="1.2" fill="none" opacity="0.7"/><path d="M169,145 q16,3 31,6" stroke="#7a6a5a" stroke-width="1.5" fill="none" opacity="0.7"/><path d="M175,111 q12,-1 24,2" stroke="#a89886" stroke-width="0.8" fill="none" opacity="0.7"/><path d="M121,112 q17,-0 33,3" stroke="#a89886" stroke-width="0.9" fill="none" opacity="0.7"/><path d="M104,129 q19,3 38,6" stroke="#7a6a5a" stroke-width="1.8" fill="none" opacity="0.7"/><path d="M174,103 q16,4 32,7" stroke="#6a5a4c" stroke-width="1.9" fill="none" opacity="0.7"/><path d="M6,113 q8,2 15,5" stroke="#6a5a4c" stroke-width="1.5" fill="none" opacity="0.7"/><path d="M116,85 q15,5 31,8" stroke="#6a5a4c" stroke-width="1.7" fill="none" opacity="0.7"/><path d="M74,129 q15,1 30,4" stroke="#a89886" stroke-width="1.4" fill="none" opacity="0.7"/><path d="M98,100 q9,-3 17,0" stroke="#a89886" stroke-width="1.4" fill="none" opacity="0.7"/><path d="M117,141 q11,-3 21,0" stroke="#b4a494" stroke-width="1.0" fill="none" opacity="0.7"/><path d="M116,114 q17,-0 34,3" stroke="#6a5a4c" stroke-width="1.4" fill="none" opacity="0.7"/><path d="M46,107 q11,2 21,5" stroke="#7a6a5a" stroke-width="1.9" fill="none" opacity="0.7"/><path d="M73,118 q11,-2 23,1" stroke="#6a5a4c" stroke-width="1.2" fill="none" opacity="0.7"/><path d="M170,83 q8,5 17,8" stroke="#7a6a5a" stroke-width="0.9" fill="none" opacity="0.7"/><path d="M90,141 q18,0 36,3" stroke="#6a5a4c" stroke-width="1.6" fill="none" opacity="0.7"/><path d="M136,136 q15,-0 31,3" stroke="#a89886" stroke-width="1.1" fill="none" opacity="0.7"/><path d="M115,125 q11,-0 22,3" stroke="#a89886" stroke-width="1.6" fill="none" opacity="0.7"/><path d="M77,93 q17,-1 34,2" stroke="#7a6a5a" stroke-width="1.8" fill="none" opacity="0.7"/><path d="M187,88 q9,1 18,4" stroke="#b4a494" stroke-width="2.0" fill="none" opacity="0.7"/><path d="M130,93 q13,-2 27,1" stroke="#a89886" stroke-width="1.7" fill="none" opacity="0.7"/><path d="M102,82 q10,3 21,6" stroke="#7a6a5a" stroke-width="1.3" fill="none" opacity="0.7"/><path d="M150,140 q9,4 17,7" stroke="#6a5a4c" stroke-width="1.0" fill="none" opacity="0.7"/><path d="M86,121 q19,0 38,3" stroke="#b4a494" stroke-width="1.4" fill="none" opacity="0.7"/><path d="M124,94 q17,4 33,7" stroke="#a89886" stroke-width="1.1" fill="none" opacity="0.7"/><path d="M171,145 q20,1 39,4" stroke="#b4a494" stroke-width="1.1" fill="none" opacity="0.7"/><path d="M136,81 q14,-3 28,0" stroke="#b4a494" stroke-width="1.5" fill="none" opacity="0.7"/><path d="M146,112 q8,3 16,6" stroke="#a89886" stroke-width="1.3" fill="none" opacity="0.7"/><path d="M7,115 q16,4 32,7" stroke="#6a5a4c" stroke-width="1.0" fill="none" opacity="0.7"/><path d="M98,128 q18,3 36,6" stroke="#6a5a4c" stroke-width="1.5" fill="none" opacity="0.7"/><path d="M131,130 q13,1 26,4" stroke="#7a6a5a" stroke-width="1.4" fill="none" opacity="0.7"/><path d="M160,117 q11,0 23,3" stroke="#7a6a5a" stroke-width="1.2" fill="none" opacity="0.7"/><path d="M27,116 q11,1 22,4" stroke="#6a5a4c" stroke-width="1.4" fill="none" opacity="0.7"/><path d="M96,120 q8,5 16,8" stroke="#6a5a4c" stroke-width="1.5" fill="none" opacity="0.7"/><path d="M188,88 q9,-2 17,1" stroke="#6a5a4c" stroke-width="1.3" fill="none" opacity="0.7"/><path d="M182,141 q11,1 22,4" stroke="#7a6a5a" stroke-width="1.2" fill="none" opacity="0.7"/>
</g>
</svg>
<style>
.tile{position:absolute;width:160px;height:90px;overflow:hidden}
.lbl{position:absolute;left:3px;bottom:2px;height:19px;background:rgba(38,38,38,0.82);border-radius:5px;padding:0 4px 0 21px;font-size:12px;line-height:19px;color:#fff;white-space:nowrap}
.lbl.nomic{padding-left:5px}
.mic{position:absolute;left:4px;top:3px;width:14px;height:13px}
.card{position:absolute;left:0;width:160px;top:36px;text-align:center;font-size:15px;font-weight:bold;color:#fff;white-space:nowrap}
.blur{filter:blur(2px)}
</style>
<div class="a" style="left:1279px;top:109px;width:320px;height:630px;background:#222;border-radius:8px;overflow:hidden">
</div>
<div class="a" style="left:1270px;top:438px;width:1px;height:26px;background:#b4b4b4"></div>
<div class="a" style="left:1273px;top:438px;width:1px;height:26px;background:#b4b4b4"></div>
<svg width="0" height="0" style="position:absolute"><defs>
<symbol id="mm" viewBox="0 0 14 13"><path d="M4.2,3.8 C4.2,1.6 5.3,0.6 6.9,0.6 C8.5,0.6 9.6,1.6 9.6,3.8 L9.6,7.6 C9.6,9.8 8.5,10.8 6.9,10.8 C5.3,10.8 4.2,9.8 4.2,7.6 Z" fill="#e8524f"/><rect x="4.4" y="11.6" width="5" height="1.3" rx="0.6" fill="#e8524f"/><path d="M6.9,10.5 L6.9,12" stroke="#e8524f" stroke-width="1.2"/><path d="M13.6,0.2 L0.6,12.8" stroke="#262626" stroke-width="2.8"/><path d="M13.2,0.6 L0.6,12.6" stroke="#e8524f" stroke-width="1.3" stroke-linecap="round"/></symbol>
</defs></svg>

<!-- row 0 -->
<div class="tile" style="left:1279px;top:109px">
<div class="card">Суми ДАПР</div>
<div class="lbl" style="letter-spacing:0.06px"><svg class="mic"><use href="#mm"/></svg>Суми ДАПР</div>
</div>
<div class="tile" style="left:1439px;top:109px">
<div class="card">Yulia</div>
<div class="lbl" style="letter-spacing:0px"><svg class="mic"><use href="#mm"/></svg>Yulia</div>
</div>

<!-- row 1: Vitaliy -->
<div class="tile" style="left:1279px;top:199px;background:#e4dcd2">
<div class="a" style="left:0;top:0;width:160px;height:90px;background:linear-gradient(90deg,#ddd4ca 0%,#e8e0d6 50%,#ebe3da 100%)"></div>
<div class="a" style="left:19px;top:0;width:122px;height:47px;background:#d9d3c4;filter:blur(0.5px)"></div>
<div class="a" style="left:23px;top:0;width:114px;height:42px;background:linear-gradient(180deg,#92b4d4 0%,#a8c4dc 28%,#6c9a5a 36%,#b4a468 44%,#d2b272 60%,#caa868 100%);filter:blur(0.8px)"></div>
<div class="a" style="left:112px;top:0;width:6px;height:40px;background:#e8e6e0;filter:blur(0.8px)"></div>
<div class="a" style="left:122px;top:0;width:5px;height:40px;background:#dcdad2;filter:blur(0.8px)"></div>
<div class="a" style="left:36px;top:62px;width:124px;height:34px;border-radius:40% 45% 0 0;background:#3e5266;filter:blur(1.2px)"></div>
<div class="a" style="left:92px;top:64px;width:18px;height:30px;background:#1e1e22;filter:blur(1px)"></div>
<div class="a" style="left:68px;top:8px;width:47px;height:62px;border-radius:46% 46% 44% 44%;background:radial-gradient(ellipse at 45% 45%,#ecc0a8 0%,#deaa92 55%,#c48a72 100%);filter:blur(0.9px)"></div>
<div class="a" style="left:69px;top:5px;width:45px;height:11px;border-radius:50% 50% 10% 10%;background:#3c2e28;filter:blur(1px)"></div>
<div class="a" style="left:0;top:-1px;width:160px;height:92px;border:2px solid #27e79a"></div>
<div class="lbl nomic" style="left:4px;bottom:3px;letter-spacing:0.38px">Vitaliy Kabanets</div>
</div>
<!-- KZ SOR -->
<div class="tile" style="left:1439px;top:199px;background:#b7bec6">
<div class="a" style="left:0;top:0;width:160px;height:22px;background:linear-gradient(180deg,#eceeef,#dfe3e6)"></div>
<div class="a" style="left:82px;top:2px;width:20px;height:3px;background:#fafafa;filter:blur(0.5px)"></div>
<div class="a" style="left:110px;top:11px;width:18px;height:3px;background:#fafafa;filter:blur(0.5px)"></div>
<div class="a" style="left:0;top:0;width:28px;height:72px;background:linear-gradient(90deg,#f4f6f6,#e2e6e8);filter:blur(0.6px)"></div>
<div class="a" style="left:45px;top:6px;width:26px;height:17px;background:#f6f7f7;filter:blur(0.6px)"></div>
<div class="a" style="left:28px;top:21px;width:132px;height:42px;background:linear-gradient(180deg,#c4cad2,#b2bac4);filter:blur(0.8px)"></div>
<div class="a" style="left:28px;top:52px;width:132px;height:18px;background:#b08858;filter:blur(1px)"></div>
<div class="a" style="left:0;top:68px;width:160px;height:22px;background:#6e625a;filter:blur(1px)"></div>
<div class="a" style="left:38px;top:49px;width:8px;height:8px;background:#2a2e36;filter:blur(0.5px)"></div>
<div class="a" style="left:92px;top:49px;width:10px;height:9px;background:#2a2e36;filter:blur(0.5px)"></div>
<div class="a" style="left:148px;top:50px;width:12px;height:10px;background:#2a2e36;filter:blur(0.5px)"></div>
<div class="a" style="left:0;top:50px;width:20px;height:32px;border-radius:45% 45% 0 0;background:#6a3446;filter:blur(0.8px)"></div>
<div class="a" style="left:2px;top:46px;width:10px;height:12px;border-radius:50%;background:#b88878;filter:blur(0.8px)"></div>
<div class="a" style="left:38px;top:58px;width:28px;height:22px;border-radius:40% 40% 0 0;background:#3e4680;filter:blur(0.8px)"></div>
<div class="a" style="left:45px;top:47px;width:12px;height:14px;border-radius:50%;background:#dcb4a4;filter:blur(0.6px)"></div>
<div class="a" style="left:44px;top:45px;width:14px;height:7px;border-radius:50% 50% 10% 10%;background:#5a3a2a;filter:blur(0.6px)"></div>
<div class="a" style="left:70px;top:58px;width:30px;height:22px;border-radius:40% 40% 0 0;background:#e8d8b8;filter:blur(0.8px)"></div>
<div class="a" style="left:79px;top:48px;width:11px;height:13px;border-radius:50%;background:#d8a898;filter:blur(0.6px)"></div>
<div class="a" style="left:78px;top:46px;width:13px;height:7px;border-radius:50% 50% 10% 10%;background:#8a3a2a;filter:blur(0.6px)"></div>
<div class="a" style="left:120px;top:62px;width:40px;height:8px;background:#6ab0a0;filter:blur(1px)"></div>
<div class="lbl" style="letter-spacing:0px"><svg class="mic"><use href="#mm"/></svg>КЗ СОР Сумська ОУНБ</div>
</div>

<!-- row 2: Andriy -->
<div class="tile" style="left:1279px;top:289px;background:#3b322a">
<div class="a" style="left:0;top:0;width:160px;height:90px;background:radial-gradient(ellipse at 58% 5%,#7a7064 0%,#51463c 30%,#3a3129 60%,#2a241e 100%)"></div>
<div class="a" style="left:0;top:0;width:60px;height:90px;background:linear-gradient(90deg,#241e18,rgba(36,30,24,0));"></div>
<div class="a" style="left:88px;top:0;width:10px;height:42px;background:#a8a090;filter:blur(3px)"></div>
<div class="a" style="left:58px;top:66px;width:70px;height:30px;border-radius:40% 40% 0 0;background:#25211d;filter:blur(1.5px)"></div>
<div class="a" style="left:74px;top:40px;width:30px;height:34px;border-radius:45%;background:#c8967e;filter:blur(1px)"></div>
<div class="a" style="left:72px;top:34px;width:33px;height:14px;border-radius:50% 50% 20% 20%;background:#2a2018;filter:blur(1px)"></div>
<div class="lbl" style="letter-spacing:0.55px"><svg class="mic"><use href="#mm"/></svg>Андрій Лютенко</div>
</div>
<!-- Balandyuk -->
<div class="tile" style="left:1439px;top:289px;background:#d9a59c">
<div class="a" style="left:0;top:0;width:160px;height:90px;background:repeating-linear-gradient(90deg,#e2b2a6 0px,#f2d0c4 12px,#dba89c 22px,#ecc4b8 32px);filter:blur(2.5px)"></div>
<div class="a" style="left:0;top:0;width:14px;height:90px;background:#b87a6a;filter:blur(2px)"></div>
<div class="a" style="left:35px;top:54px;width:86px;height:40px;border-radius:45% 45% 0 0;background:#545c6c;filter:blur(1.5px)"></div>
<div class="a" style="left:58px;top:54px;width:36px;height:10px;border-radius:50%;background:#e8e0d8;filter:blur(1px)"></div>
<div class="a" style="left:54px;top:2px;width:38px;height:58px;border-radius:48%;background:#dfb2a2;filter:blur(1.2px)"></div>
<div class="a" style="left:53px;top:1px;width:40px;height:16px;border-radius:50% 50% 20% 20%;background:#9a7868;filter:blur(2px)"></div>
<div class="lbl" style="letter-spacing:0.33px"><svg class="mic"><use href="#mm"/></svg>***Баландюк Аліна***</div>
</div>

<!-- row 3: Bohdana -->
<div class="tile" style="left:1279px;top:379px;background:#4a4846">
<div class="a" style="left:0;top:0;width:160px;height:90px;background:linear-gradient(90deg,#3a3634 0%,#4e4a46 30%,#7a746e 55%,#55585a 80%,#3e4446 100%);filter:blur(3px)"></div>
<div class="a" style="left:60px;top:0;width:60px;height:30px;background:#b0a8a0;filter:blur(8px)"></div>
<div class="a" style="left:56px;top:12px;width:58px;height:90px;border-radius:45% 45% 0 0;background:#6a5a4c;filter:blur(2px)"></div>
<div class="a" style="left:62px;top:22px;width:48px;height:72px;border-radius:48%;background:#c8bac2;filter:blur(1.5px)"></div>
<div class="lbl" style="letter-spacing:0.43px"><svg class="mic"><use href="#mm"/></svg>Богдана Бороніна</div>
</div>
<!-- Iryna -->
<div class="tile" style="left:1439px;top:379px">
<div class="a" style="left:44px;top:10px;width:72px;height:80px;border-radius:6px 6px 0 0;background:radial-gradient(ellipse at 50% 40%,#1a7664 0%,#0f6656 60%,#0b5648 100%);overflow:hidden">
<div class="a" style="left:10px;top:32px;width:50px;height:50px;border-radius:45% 45% 0 0;background:#e6e6ee;filter:blur(0.8px)"></div>
<div class="a" style="left:20px;top:6px;width:28px;height:34px;border-radius:50%;background:#2a1c18;filter:blur(0.8px)"></div>
<div class="a" style="left:26px;top:12px;width:22px;height:30px;border-radius:50%;background:#d9a890;filter:blur(0.8px)"></div>
</div>
<div class="lbl" style="letter-spacing:0.53px"><svg class="mic"><use href="#mm"/></svg>Ірина Григорівна Ша...</div>
</div>

<!-- row 4: Baltak -->
<div class="tile" style="left:1279px;top:469px">
<div class="a" style="left:54px;top:0;width:51px;height:90px;background:#a45a3c;overflow:hidden">
<div class="a" style="left:-10px;top:0;width:30px;height:90px;background:linear-gradient(160deg,#b8aa9c,#908478);transform:skewX(-14deg);filter:blur(0.8px)"></div>
<div class="a" style="left:0;top:50px;width:51px;height:40px;background:#c2b0a0;filter:blur(2px)"></div>
<div class="a" style="left:0;top:60px;width:44px;height:30px;border-radius:30% 40% 0 0;background:#3fb45a;filter:blur(0.8px)"></div>
<div class="a" style="left:41px;top:64px;width:10px;height:26px;background:#d8ac94;filter:blur(0.8px)"></div>
<div class="a" style="left:8px;top:26px;width:34px;height:38px;border-radius:50%;background:#b49a78;filter:blur(1px)"></div>
<div class="a" style="left:14px;top:34px;width:22px;height:28px;border-radius:50%;background:#e2b8a0;filter:blur(0.8px)"></div>
<div class="a" style="left:36px;top:38px;width:14px;height:22px;border-radius:50%;background:#dcae96;filter:blur(1px)"></div>
</div>
<div class="lbl" style="letter-spacing:0.09px"><svg class="mic"><use href="#mm"/></svg>Балтак Яна</div>
</div>
<!-- Moskalchuk -->
<div class="tile" style="left:1439px;top:469px;background:#8e9a92">
<div class="a" style="left:0;top:0;width:160px;height:90px;background:linear-gradient(90deg,#8a9690 0%,#96a29c 35%,#a2b0a8 60%,#98a69e 85%,#6e7878 100%);filter:blur(2px)"></div>
<div class="a" style="left:130px;top:45px;width:30px;height:45px;background:#5e686e;filter:blur(2px)"></div>
<div class="a" style="left:80px;top:20px;width:50px;height:76px;border-radius:45% 45% 0 0;background:#6e4c40;filter:blur(1.5px)"></div>
<div class="a" style="left:88px;top:30px;width:34px;height:38px;border-radius:48%;background:#dcc0b0;filter:blur(1px)"></div>
<div class="a" style="left:70px;top:80px;width:70px;height:14px;background:#d8ccc8;filter:blur(1.5px)"></div>
<div class="lbl" style="letter-spacing:0.47px"><svg class="mic"><use href="#mm"/></svg>Москальчук Наталія</div>
</div>

<!-- row 5: Kruhlichenko -->
<div class="tile" style="left:1279px;top:559px">
<div class="a" style="left:46px;top:0;width:68px;height:90px;background:linear-gradient(180deg,#f6f6f4 0%,#f0efec 60%,#e8e4de 100%);overflow:hidden">
<div class="a" style="left:0;top:40px;width:14px;height:50px;background:#d8a470;filter:blur(1px)"></div>
<div class="a" style="left:44px;top:0;width:6px;height:60px;background:#d6d0c6;filter:blur(1.5px);transform:skewX(-10deg)"></div>
<div class="a" style="left:12px;top:36px;width:32px;height:30px;border-radius:50% 50% 30% 30%;background:#b07858;filter:blur(1px)"></div>
<div class="a" style="left:16px;top:46px;width:24px;height:32px;border-radius:50%;background:#e0b6a6;filter:blur(1px)"></div>
<div class="a" style="left:6px;top:76px;width:50px;height:16px;background:#6a5a5c;filter:blur(1px)"></div>
</div>
<div class="lbl" style="letter-spacing:0.72px"><svg class="mic"><use href="#mm"/></svg>Яна Кругліченко</div>
</div>
<!-- Nalyvaiko -->
<div class="tile" style="left:1439px;top:559px">
<div class="a" style="left:20px;top:0;width:120px;height:90px;background:#a4a4b2;overflow:hidden">
<div class="a" style="left:0;top:0;width:120px;height:34px;background:linear-gradient(180deg,#f4f2f2,#e4e2e4);filter:blur(1px)"></div>
<div class="a" style="left:0;top:34px;width:120px;height:56px;background:linear-gradient(90deg,#9898a8,#aeaebc,#9c9cac);filter:blur(1.5px)"></div>
<div class="a" style="left:100px;top:45px;width:20px;height:45px;background:#d2bc90;filter:blur(1px)"></div>
<div class="a" style="left:18px;top:56px;width:20px;height:34px;background:#2a2a2e;filter:blur(1px)"></div>
<div class="a" style="left:24px;top:62px;width:80px;height:32px;border-radius:40% 40% 0 0;background:#b8aaa8;filter:blur(1px)"></div>
<div class="a" style="left:42px;top:24px;width:36px;height:50px;border-radius:45% 45% 20% 20%;background:#6a5040;filter:blur(1.2px)"></div>
<div class="a" style="left:48px;top:34px;width:24px;height:30px;border-radius:50%;background:#d8b0a0;filter:blur(1px)"></div>
</div>
<div class="lbl" style="letter-spacing:0.33px"><svg class="mic"><use href="#mm"/></svg>Наливайко&nbsp; Софія</div>
</div>

<!-- row 6: Kateryna -->
<div class="tile" style="left:1279px;top:649px;border-radius:0 0 0 8px;background:#cfe2dc">
<div class="a" style="left:0;top:0;width:160px;height:90px;background:linear-gradient(90deg,#d4e4de 0%,#e2ebe6 45%,#dce8ea 100%)"></div>
<div class="a" style="left:61px;top:0;width:99px;height:12px;background:#e4eef0;border-bottom:2px solid #2a2a2a;border-left:2px solid #2a2a2a;filter:blur(0.4px)"></div>
<div class="a" style="left:70px;top:4px;width:78px;height:90px;border-radius:45% 45% 20% 20%;background:#a89878;filter:blur(1.5px)"></div>
<div class="a" style="left:80px;top:26px;width:50px;height:46px;border-radius:46%;background:#e6c6b0;filter:blur(1px)"></div>
<div class="a" style="left:78px;top:12px;width:54px;height:22px;border-radius:50% 50% 30% 30%;background:#b09a78;filter:blur(1.5px)"></div>
<div class="a" style="left:70px;top:70px;width:68px;height:22px;background:#6a6058;filter:blur(1px)"></div>
<div class="lbl" style="letter-spacing:0.58px"><svg class="mic"><use href="#mm"/></svg>Катерина Макаренко</div>
</div>
<div class="tile" style="left:1439px;top:649px">
<div class="card">Поліна&nbsp; Массалі...</div>
<div class="lbl" style="letter-spacing:0.34px"><svg class="mic"><use href="#mm"/></svg>Поліна Массалітіна</div>
</div>

<div class="a" style="left:1402px;top:740px;width:73px;height:33px;background:#121212"></div>
<svg class="a" style="left:1431px;top:750px" width="16" height="10" viewBox="0 0 16 10"><path d="M2,2 L8,8 L14,2" stroke="#8a8aa0" stroke-width="1.6" fill="none"/></svg>
<!-- top bar -->
<div class="a" style="left:16px;top:5px;font-size:13px;color:#f0f0f0;letter-spacing:0.5px">zoom</div>
<div class="a" style="left:15px;top:18px;font-size:15px;font-weight:bold;color:#f4f4f4;letter-spacing:-0.1px">Workplace</div>
<svg class="a" style="left:122px;top:18px" width="12" height="8" viewBox="0 0 12 8"><path d="M1.5,1.5 L6,6 L10.5,1.5" stroke="#e8e8e8" stroke-width="1.4" fill="none"/></svg>
<svg class="a" style="left:163px;top:14px" width="18" height="17" viewBox="0 0 18 17"><circle cx="9" cy="3.5" r="2.6" fill="#fff"/><circle cx="3.5" cy="6" r="2.3" fill="#fff"/><circle cx="14.5" cy="6" r="2.3" fill="#fff"/><path d="M4,16 C4,10 14,10 14,16 Z" fill="#fff"/><path d="M0,12 C0,8.5 6,8.5 6,11 L5,13 L0,13 Z M18,12 C18,8.5 12,8.5 12,11 L13,13 L18,13 Z" fill="#fff"/><rect x="4" y="12" width="10" height="4.5" rx="2" fill="#fff"/></svg>
<div class="a" style="left:190px;top:16px;font-size:12px;color:#f0f0f0">Конференция</div>
<div class="a" style="left:396px;top:6px;width:236px;height:34px;background:#313131;border-radius:7px"></div>
<div class="a" style="left:404px;top:15px;width:17px;height:17px;background:#9a3fb8;border-radius:4px;font-size:11px;line-height:17px;color:#fff;text-align:center;letter-spacing:-0.5px">VK</div>
<div class="a" style="left:430px;top:15px;font-size:12px;color:#f2f2f2;letter-spacing:-0.2px">Экран (Vitaliy Kabanets)</div>
<svg class="a" style="left:609px;top:14px" width="18" height="18" viewBox="0 0 18 18"><circle cx="9" cy="9" r="7.6" stroke="#e8e8e8" stroke-width="1.3" fill="none"/><circle cx="5.5" cy="9" r="1.1" fill="#fff"/><circle cx="9" cy="9" r="1.1" fill="#fff"/><circle cx="12.5" cy="9" r="1.1" fill="#fff"/></svg>
<div class="a" style="left:1309px;top:13px;font-size:12px;color:#f0f0f0">Вход</div>
<svg class="a" style="left:1356px;top:11px" width="18" height="19" viewBox="0 0 18 19"><path d="M9,1 L16,3.5 L16,9 C16,13.5 12.5,16.5 9,18 C5.5,16.5 2,13.5 2,9 L2,3.5 Z" fill="#2dc653"/><path d="M5.5,9.5 L8,12 L12.5,7" stroke="#0b0b0b" stroke-width="1.8" fill="none"/></svg>
<div class="a" style="left:1395px;top:13px;font-size:12px;color:#f0f0f0">Вид</div>
<svg class="a" style="left:1422px;top:14px" width="12" height="12" viewBox="0 0 12 12"><rect x="0.5" y="0.5" width="6" height="11" fill="#d8d8d8"/><rect x="7.5" y="0.5" width="3.5" height="3" fill="#d8d8d8"/><rect x="7.5" y="4.5" width="3.5" height="3" fill="#d8d8d8"/><rect x="7.5" y="8.5" width="3.5" height="3" fill="#d8d8d8"/></svg>
<div class="a" style="left:1480px;top:20px;width:11px;height:1px;background:#d8d8d8"></div>
<svg class="a" style="left:1524px;top:13px" width="14" height="14" viewBox="0 0 14 14"><rect x="1" y="3.5" width="9" height="9" rx="1.5" stroke="#e8e8e8" stroke-width="1.1" fill="none"/><path d="M3.5,1.2 L11,1.2 C12,1.2 12.8,2 12.8,3 L12.8,10.5" stroke="#e8e8e8" stroke-width="1.1" fill="none"/></svg>
<svg class="a" style="left:1570px;top:13px" width="14" height="14" viewBox="0 0 14 14"><path d="M1,1 L13,13 M13,1 L1,13" stroke="#e8e8e8" stroke-width="1.2"/></svg>

<!-- bottom toolbar -->
<svg class="a" style="left:38px;top:809px" width="28" height="28" viewBox="0 0 28 28"><rect x="9.5" y="2" width="8" height="14" rx="4" stroke="#f0f0f0" stroke-width="1.4" fill="none"/><path d="M6,11 C6,17 9,19.5 13.5,19.5 C18,19.5 21,17 21,11" stroke="#f0f0f0" stroke-width="1.4" fill="none"/><path d="M13.5,19.5 L13.5,25 M9,25.5 L18,25.5" stroke="#f0f0f0" stroke-width="1.4"/><path d="M3,25 L25,3" stroke="#fa1e5a" stroke-width="2.4" stroke-linecap="round"/></svg>
<svg class="a" style="left:131px;top:809px" width="28" height="28" viewBox="0 0 28 28"><rect x="2.5" y="7" width="16" height="14" rx="2" stroke="#f0f0f0" stroke-width="1.4" fill="none"/><path d="M18.5,12 L25,7.5 L25,20.5 L18.5,16" stroke="#f0f0f0" stroke-width="1.4" fill="none"/><path d="M3,25 L25,3" stroke="#fa1e5a" stroke-width="2.4" stroke-linecap="round"/></svg>
<svg class="a" style="left:79px;top:819px" width="10" height="7" viewBox="0 0 10 7"><path d="M1.5,5 L5,1.5 L8.5,5" stroke="#c8c8c8" stroke-width="1.2" fill="none"/></svg>
<div class="tb-lbl" style="left:22px;top:839px;width:60px">Звук</div>
<div class="tb-lbl" style="left:115px;top:839px;width:60px">Видео</div>

<svg class="a" style="left:600px;top:811px" width="24" height="24" viewBox="0 0 24 24"><circle cx="8.2" cy="6.5" r="2.4" stroke="#f0f0f0" stroke-width="1.5" fill="none"/><path d="M3.6,20.4 L3.6,17.2 C3.6,14.4 5.4,12.8 8.2,12.8 C9.6,12.8 10.8,13.2 11.6,14.2" stroke="#f0f0f0" stroke-width="1.5" fill="none" stroke-linecap="round"/><path d="M3.6,20.4 L10.8,20.4" stroke="#f0f0f0" stroke-width="1.5" stroke-linecap="round"/><circle cx="15.8" cy="9.4" r="2.2" stroke="#f0f0f0" stroke-width="1.5" fill="none"/><rect x="11" y="15" width="10" height="5.8" rx="2.9" stroke="#f0f0f0" stroke-width="1.5" fill="none"/></svg>
<div class="a" style="left:628px;top:814px;font-size:12px;color:#d8d8d8">38</div>
<svg class="a" style="left:660px;top:819px" width="10" height="7" viewBox="0 0 10 7"><path d="M1.5,5 L5,1.5 L8.5,5" stroke="#c8c8c8" stroke-width="1.2" fill="none"/></svg>
<div class="tb-lbl" style="left:572px;top:839px;width:80px">Участники</div>

<svg class="a" style="left:709px;top:811px" width="24" height="24" viewBox="0 0 24 24"><path d="M6,6 C6,3.5 7.5,2 10,2 L19,2 C21.5,2 22.5,3.5 22.5,6 L22.5,11 C22.5,13 21.5,14 19.5,14" stroke="#f0f0f0" stroke-width="1.4" fill="none"/><path d="M4,6 L15,6 C17.5,6 18.5,7.5 18.5,10 L18.5,15 C18.5,17.5 17.5,19 15,19 L9,19 L5.5,22.5 L5.5,19 C3,19 1.5,17.5 1.5,15 L1.5,10 C1.5,7.5 2.5,6 4,6 Z" stroke="#f0f0f0" stroke-width="1.4" fill="none"/><circle cx="6" cy="12.5" r="1" fill="#fff"/><circle cx="10" cy="12.5" r="1" fill="#fff"/><circle cx="14" cy="12.5" r="1" fill="#fff"/></svg>
<svg class="a" style="left:750px;top:819px" width="10" height="7" viewBox="0 0 10 7"><path d="M1.5,5 L5,1.5 L8.5,5" stroke="#c8c8c8" stroke-width="1.2" fill="none"/></svg>
<div class="tb-lbl" style="left:691px;top:839px;width:60px">Чат</div>

<svg class="a" style="left:803px;top:811px" width="26" height="24" viewBox="0 0 26 24"><path d="M13,22 C5,16 1.5,12 1.5,7.5 C1.5,4 4,1.5 7.5,1.5 C10,1.5 12,3 13,5 C14,3 16,1.5 18.5,1.5 C22,1.5 24.5,4 24.5,7.5 C24.5,12 21,16 13,22 Z" stroke="#f0f0f0" stroke-width="1.5" fill="none" transform="rotate(-8 13 12)"/></svg>
<div class="tb-lbl" style="left:766px;top:839px;width:100px">Отреагировать</div>

<div class="a" style="left:903px;top:813px;width:24px;height:20px;background:#12eb8e;border-radius:3px"></div>
<svg class="a" style="left:903px;top:813px" width="24" height="20" viewBox="0 0 24 20"><path d="M12,16 L12,9" stroke="#000" stroke-width="2.6"/><path d="M7,10.5 L12,5 L17,10.5 Z" fill="#000"/></svg>
<div class="tb-lbl" style="left:865px;top:839px;width:100px">Поделиться</div>

<svg class="a" style="left:996px;top:811px" width="24" height="24" viewBox="0 0 24 24"><path d="M2,9 L2,5 C2,3 3,2 5,2 L9,2 M22,15 L22,19 C22,21 21,22 19,22 L15,22" stroke="#f0f0f0" stroke-width="1.6" fill="none"/><circle cx="17.5" cy="6" r="3.5" stroke="#f0f0f0" stroke-width="1.6" fill="none"/><circle cx="6" cy="18" r="3.5" stroke="#f0f0f0" stroke-width="1.6" fill="none"/></svg>
<div class="tb-lbl" style="left:958px;top:839px;width:100px">Приложения</div>

<svg class="a" style="left:1092px;top:810px" width="26" height="26" viewBox="0 0 26 26"><circle cx="13" cy="13" r="11.5" stroke="#f0f0f0" stroke-width="1.5" fill="none"/><circle cx="8" cy="13" r="1.4" fill="#fff"/><circle cx="13" cy="13" r="1.4" fill="#fff"/><circle cx="18" cy="13" r="1.4" fill="#fff"/></svg>
<div class="tb-lbl" style="left:1055px;top:839px;width:100px">Дополнительно</div>

<svg class="a" style="left:1538px;top:810px" width="28" height="26" viewBox="0 0 28 26"><path d="M17,3 L25,1 L25,21 L17,24 Z" stroke="#fa1e5a" stroke-width="1.8" fill="none"/><circle cx="10" cy="6" r="2.8" stroke="#f0f0f0" stroke-width="1.4" fill="none"/><path d="M7,10 L12,10 L14,16 L11,16 L13,24 M8,11 L5,17 M9,16 L6,24 M12,11 L16,15" stroke="#f0f0f0" stroke-width="1.4" fill="none"/></svg>
<div class="tb-lbl" style="left:1521px;top:839px;width:60px">Выйти</div>

<!-- taskbar -->
<svg class="a" style="left:14px;top:870px" width="20" height="20" viewBox="0 0 20 20"><path d="M1,3 L8.5,2 L8.5,9.3 L1,9.3 Z M9.5,1.8 L19,0.5 L19,9.3 L9.5,9.3 Z M1,10.3 L8.5,10.3 L8.5,17.8 L1,16.8 Z M9.5,10.3 L19,10.3 L19,19.3 L9.5,18 Z" fill="#fff"/></svg>
<svg class="a" style="left:60px;top:868px" width="24" height="24" viewBox="0 0 24 24"><circle cx="13.5" cy="9.5" r="7" stroke="#fff" stroke-width="1.8" fill="none"/><path d="M8.5,14.5 L2,21.5" stroke="#fff" stroke-width="2.2"/></svg>
<svg class="a" style="left:110px;top:870px" width="20" height="20" viewBox="0 0 20 20"><rect x="2" y="3" width="11" height="14" stroke="#fff" stroke-width="1.2" fill="none"/><path d="M2,7 L13,7 M2,13 L13,13 M16,2 L16,18 M18,5 L18,15" stroke="#fff" stroke-width="1.2"/></svg>
<svg class="a" style="left:158px;top:867px" width="24" height="24" viewBox="0 0 24 24"><rect x="1" y="1" width="22" height="22" rx="1.5" fill="#3040b8"/><rect x="5" y="1" width="14" height="7" fill="#d8dce8"/><rect x="13" y="2" width="3" height="5" fill="#3040b8"/><rect x="3" y="11" width="18" height="11" fill="#f4f0f2"/><path d="M3,14 L21,14 M3,17 L21,17 M3,20 L21,20" stroke="#e07080" stroke-width="1.2"/></svg>
<svg class="a" style="left:207px;top:867px" width="24" height="24" viewBox="0 0 24 24"><rect x="1" y="1" width="22" height="22" fill="#001e36" stroke="#31a8ff" stroke-width="1.2"/><text x="12" y="17" font-family="Liberation Sans" font-weight="bold" font-size="11" fill="#31a8ff" text-anchor="middle">Ps</text></svg>
<svg class="a" style="left:257px;top:867px" width="26" height="26" viewBox="0 0 26 26"><circle cx="12" cy="12" r="11" fill="#db4437"/><path d="M12,12 L22.5,8.5 A11,11 0 0 1 12,23 Z" fill="#0f9d58"/><path d="M12,12 L12,23 A11,11 0 0 1 1.5,8 Z" fill="#f4b400"/><circle cx="12" cy="12" r="5" fill="#fff"/><circle cx="12" cy="12" r="4" fill="#4285f4"/><circle cx="19" cy="19" r="6" fill="#e8501e"/><text x="19" y="22.5" font-family="Liberation Sans" font-size="8" fill="#fff" text-anchor="middle">K</text></svg>
<div class="a" style="left:250px;top:897px;width:39px;height:3px;background:#7ab8e8"></div>
<svg class="a" style="left:306px;top:868px" width="24" height="24" viewBox="0 0 24 24"><circle cx="12" cy="12" r="12" fill="#fff"/><path d="M7.4,16.6 A6.8,6.8 0 1 1 9.4,18.2 L5.6,19.2 Z" stroke="#25d366" stroke-width="1.5" fill="none" stroke-linejoin="round"/><path d="M9.3,8.4 C8.8,9.6 9.4,11.2 10.6,12.6 C11.8,14 13.4,14.8 14.6,14.6 L15.4,13.4 L13.9,12.5 L13.1,13.2 C12.2,12.8 11.3,11.9 10.9,11 L11.6,10.2 L10.9,8.6 Z" fill="#25d366"/></svg>
<div class="a" style="left:342px;top:860px;width:48px;height:40px;background:rgba(255,255,255,0.12)"></div>
<div class="a" style="left:343px;top:897px;width:47px;height:3px;background:#7ab8e8"></div>
<div class="a" style="left:355px;top:868px;width:24px;height:24px;border-radius:50%;background:radial-gradient(circle at 40% 35%,#3d7cf5,#0b5cff 60%,#0a46c8);font-size:10px;font-weight:bold;color:#fff;line-height:24px;text-align:center">zm</div>
<svg class="a" style="left:403px;top:867px" width="26" height="26" viewBox="0 0 26 26"><ellipse cx="12" cy="10" rx="10" ry="7" fill="#fff" stroke="#d43a3a" stroke-width="2"/><path d="M3,12 C2,15 5,17 9,17" stroke="#888" stroke-width="2" fill="none"/><path d="M12,9 L16,20 M16,9 L12,20" stroke="#555" stroke-width="1.2"/><circle cx="12" cy="21" r="2.5" stroke="#1a7ad4" stroke-width="1.5" fill="none"/><circle cx="18" cy="21" r="2.5" stroke="#1a7ad4" stroke-width="1.5" fill="none"/></svg>
<svg class="a" style="left:454px;top:867px" width="20" height="26" viewBox="0 0 20 26"><rect x="1" y="1" width="18" height="24" rx="2" fill="#8ac8f0" stroke="#4a90c8"/><rect x="4" y="4" width="12" height="6" fill="#e8f4fc"/><path d="M4,13 L16,13 M4,17 L16,17 M4,21 L16,21 M8,12 L8,23 M12,12 L12,23" stroke="#3a7ab0" stroke-width="1.2"/></svg>
<svg class="a" style="left:501px;top:869px" width="24" height="22" viewBox="0 0 24 22"><path d="M1,3 L9,3 L11,5 L23,5 L23,21 L1,21 Z" fill="#e8b830"/><rect x="1" y="8" width="22" height="13" fill="#f8d458"/><rect x="8" y="14" width="8" height="7" fill="#2a7ad8"/></svg>
<div class="a" style="left:494px;top:897px;width:40px;height:3px;background:#7ab8e8"></div>
<svg class="a" style="left:551px;top:869px" width="24" height="22" viewBox="0 0 24 22"><rect x="1" y="1" width="22" height="20" fill="#2a6ab0"/><rect x="3" y="3" width="18" height="16" fill="#88c0e0"/><path d="M3,15 C8,8 12,10 21,6 L21,19 L3,19 Z" fill="#4a8a5a"/></svg>
<div class="a" style="left:543px;top:897px;width:40px;height:3px;background:#7ab8e8"></div>
<svg class="a" style="left:600px;top:868px" width="24" height="24" viewBox="0 0 24 24"><rect x="9" y="3" width="13" height="18" fill="#fff" stroke="#8a9ab8" stroke-width="0.8"/><path d="M12,7 L20,7 M12,10 L20,10 M12,13 L20,13 M12,16 L20,16" stroke="#2a5aaa" stroke-width="1"/><rect x="1" y="1" width="13" height="22" fill="#1f55a8"/><text x="7.5" y="16" font-family="Liberation Sans" font-weight="bold" font-size="10" fill="#fff" text-anchor="middle">W</text></svg>
<div class="a" style="left:592px;top:897px;width:40px;height:3px;background:#7ab8e8"></div>

<svg class="a" style="left:1378px;top:874px" width="14" height="10" viewBox="0 0 14 10"><path d="M1,8 L7,2 L13,8" stroke="#fff" stroke-width="1.3" fill="none"/></svg>
<svg class="a" style="left:1400px;top:870px" width="18" height="20" viewBox="0 0 18 20"><path d="M8,1 L15,3.5 L15,9 C15,13 12,16 8,18 C4,16 1,13 1,9 L1,3.5 Z" fill="#fff"/><path d="M8,1 L8,18 M1,9 L15,9" stroke="#222" stroke-width="1.2"/><circle cx="13" cy="15" r="4" fill="#1a9a4a"/><path d="M11,15 L12.5,16.5 L15,13.5" stroke="#fff" stroke-width="1" fill="none"/></svg>
<svg class="a" style="left:1426px;top:870px" width="16" height="20" viewBox="0 0 16 20"><rect x="3" y="1" width="6" height="5" stroke="#fff" stroke-width="1" fill="none"/><rect x="2" y="6" width="8" height="12" rx="1" stroke="#fff" stroke-width="1.1" fill="none"/><path d="M10,16 L12,18 L15,14" stroke="#ccc" stroke-width="1" fill="none"/></svg>
<svg class="a" style="left:1447px;top:871px" width="20" height="18" viewBox="0 0 20 18"><rect x="4" y="2" width="15" height="11" stroke="#fff" stroke-width="1.1" fill="none"/><path d="M11.5,13 L11.5,16 M7,16.5 L16,16.5 M1,2 L1,12" stroke="#fff" stroke-width="1.1"/><rect x="0" y="0" width="5" height="4" fill="#fff"/></svg>
<svg class="a" style="left:1472px;top:871px" width="18" height="18" viewBox="0 0 18 18"><path d="M1,6.5 L4,6.5 L8,3 L8,15 L4,11.5 L1,11.5 Z" stroke="#fff" stroke-width="1.1" fill="none"/><path d="M10.5,6.5 C11.5,8 11.5,10 10.5,11.5 M12.5,4.5 C14.5,7 14.5,11 12.5,13.5 M14.5,2.5 C17.5,6 17.5,12 14.5,15.5" stroke="#bbb" stroke-width="1" fill="none"/></svg>
<div class="a" style="left:1498px;top:872px;font-size:12px;color:#fff">ENG</div>
<div class="a" style="left:1541px;top:863px;width:40px;font-size:12px;color:#fff;text-align:center">10:52</div>
<div class="a" style="left:1527px;top:880px;width:70px;font-size:11.5px;color:#fff;text-align:center">12.11.2024</div>
<div class="a" style="left:1596px;top:860px;width:1px;height:40px;background:#8a8a8a"></div>

</body></html>
